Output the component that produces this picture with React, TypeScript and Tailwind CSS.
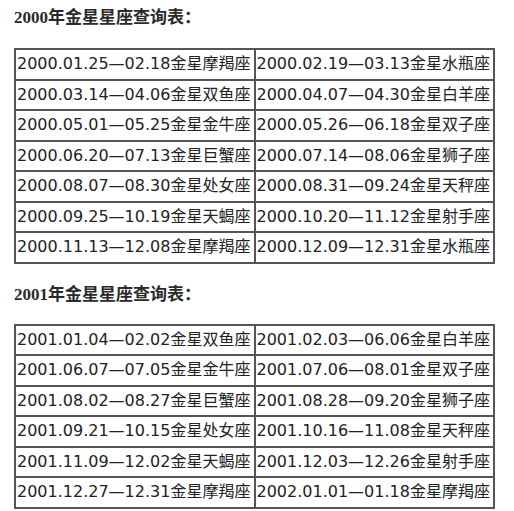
const t2000: [string, string][] = [
  ["2000.01.25—02.18金星摩羯座", "2000.02.19—03.13金星水瓶座"],
  ["2000.03.14—04.06金星双鱼座", "2000.04.07—04.30金星白羊座"],
  ["2000.05.01—05.25金星金牛座", "2000.05.26—06.18金星双子座"],
  ["2000.06.20—07.13金星巨蟹座", "2000.07.14—08.06金星狮子座"],
  ["2000.08.07—08.30金星处女座", "2000.08.31—09.24金星天秤座"],
  ["2000.09.25—10.19金星天蝎座", "2000.10.20—11.12金星射手座"],
  ["2000.11.13—12.08金星摩羯座", "2000.12.09—12.31金星水瓶座"],
];

const t2001: [string, string][] = [
  ["2001.01.04—02.02金星双鱼座", "2001.02.03—06.06金星白羊座"],
  ["2001.06.07—07.05金星金牛座", "2001.07.06—08.01金星双子座"],
  ["2001.08.02—08.27金星巨蟹座", "2001.08.28—09.20金星狮子座"],
  ["2001.09.21—10.15金星处女座", "2001.10.16—11.08金星天秤座"],
  ["2001.11.09—12.02金星天蝎座", "2001.12.03—12.26金星射手座"],
  ["2001.12.27—12.31金星摩羯座", "2002.01.01—01.18金星摩羯座"],
];

function Table({ rows }: { rows: [string, string][] }) {
  return (
    <table className="w-[481px] border border-[#555] border-separate border-spacing-0">
      <tbody>
        {rows.map((r, i) => (
          <tr key={i}>
            {r.map((c, j) => (
              <td
                key={j}
                className="border border-[#555] px-[1px] py-[1px] text-[16px] leading-[26.5px] whitespace-nowrap"
              >
                {c}
              </td>
            ))}
          </tr>
        ))}
      </tbody>
    </table>
  );
}

export default function App() {
  return (
    <div
      className="px-[14px] pt-[5px] text-[#222]"
      style={{ fontFamily: '"DejaVu Sans", "Noto Sans CJK SC", sans-serif' }}
    >
      <h2 className="text-[17px] font-bold leading-[25px] mb-[18px] text-[#2a2a2a] font-['Liberation_Serif','Noto_Sans_CJK_SC',serif]">
        2000年金星星座查询表：
      </h2>
      <Table rows={t2000} />
      <h2 className="text-[17px] font-bold leading-[25px] mt-[18px] mb-[17px] text-[#2a2a2a] font-['Liberation_Serif','Noto_Sans_CJK_SC',serif]">
        2001年金星星座查询表：
      </h2>
      <Table rows={t2001} />
    </div>
  );
}
